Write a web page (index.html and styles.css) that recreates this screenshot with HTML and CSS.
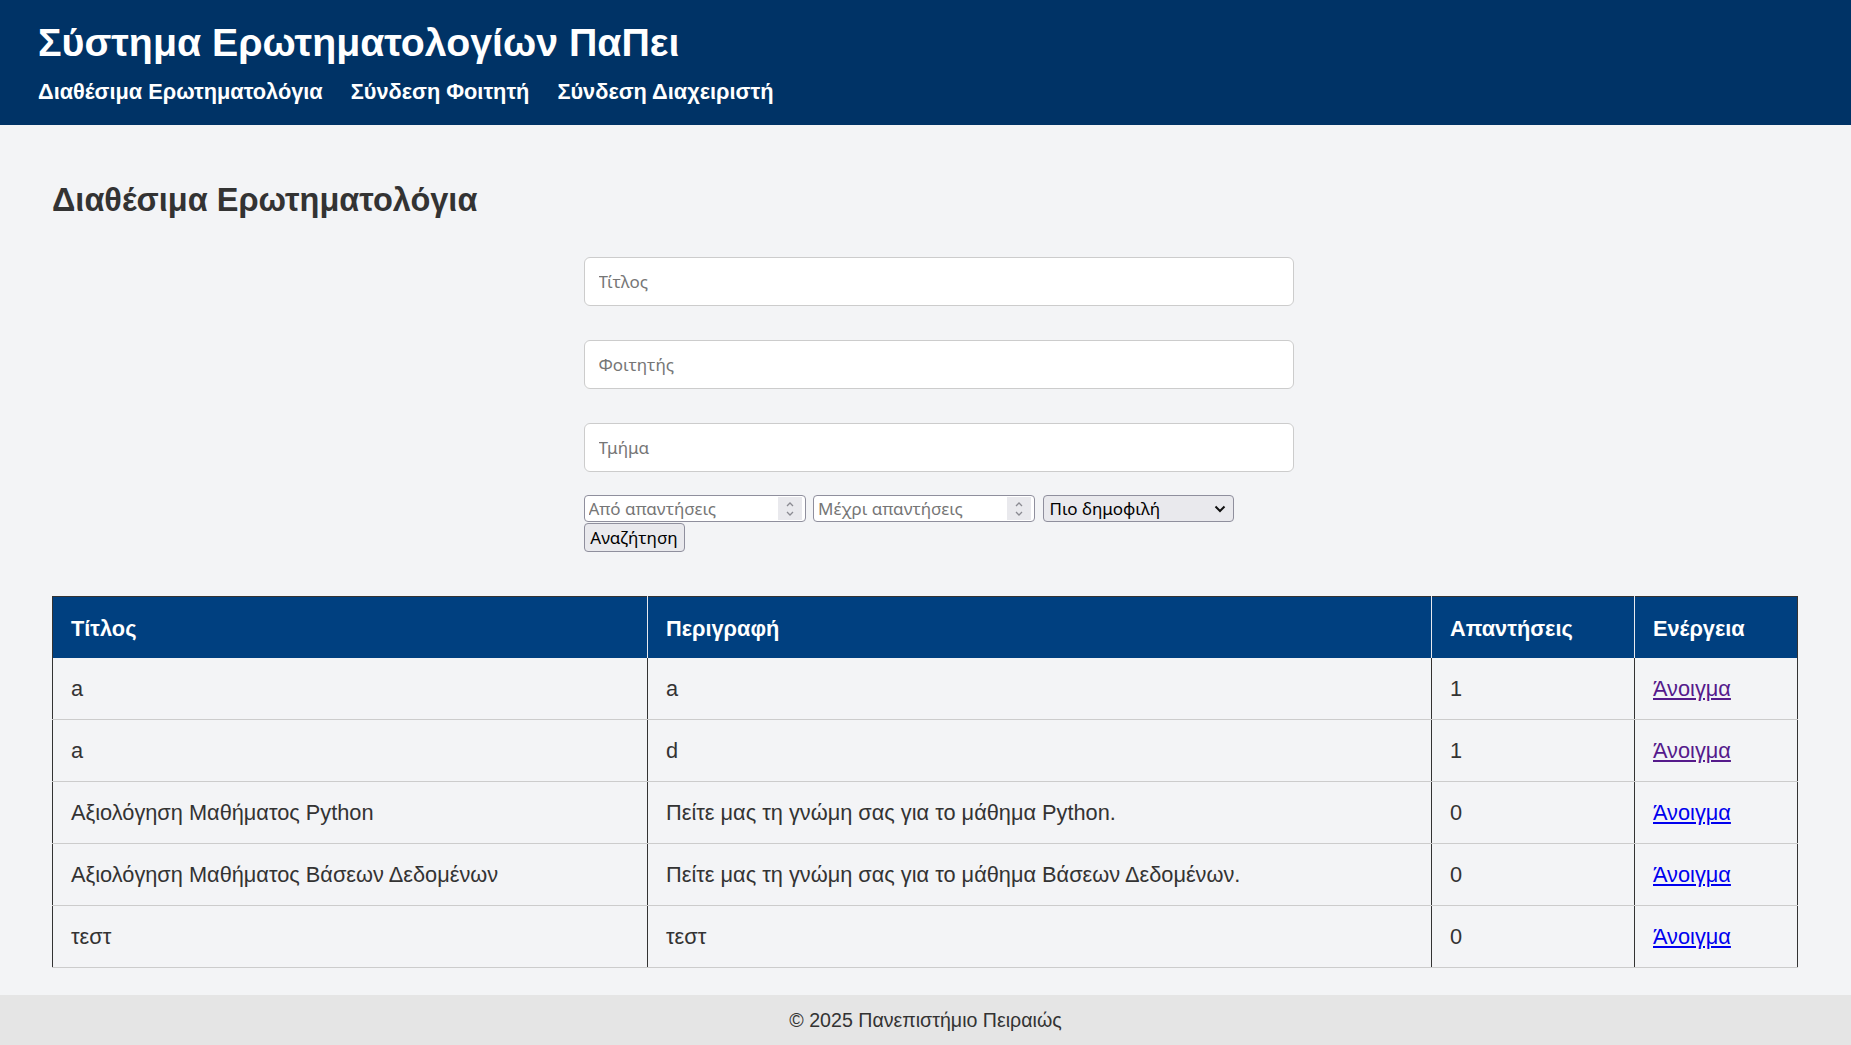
FILE: index.html
```html
<!DOCTYPE html>
<html lang="el">
<head>
<meta charset="utf-8">
<title>Σύστημα Ερωτηματολογίων ΠαΠει</title>
<link rel="stylesheet" href="styles.css">
</head>
<body>
<header class="site-header">
  <h1 class="site-title">Σύστημα Ερωτηματολογίων ΠαΠει</h1>
  <nav class="site-nav">
    <a href="#">Διαθέσιμα Ερωτηματολόγια</a>
    <a href="#">Σύνδεση Φοιτητή</a>
    <a href="#">Σύνδεση Διαχειριστή</a>
  </nav>
</header>
<main class="content">
  <h2 class="page-title">Διαθέσιμα Ερωτηματολόγια</h2>
  <form class="search-form">
    <div class="fields">
      <input class="text-field" type="text" placeholder="Τίτλος">
      <input class="text-field" type="text" placeholder="Φοιτητής">
      <input class="text-field" type="text" placeholder="Τμήμα">
    </div>
    <div class="filter-row">
      <div class="num-field">
        <input type="number" placeholder="Από απαντήσεις">
        <span class="spin"><svg width="24" height="22" viewBox="0 0 24 22"><path d="M9 8 L12 5 L15 8" fill="none" stroke="#8b8b92" stroke-width="1.3"/><path d="M9 14 L12 17 L15 14" fill="none" stroke="#8b8b92" stroke-width="1.3"/></svg></span>
      </div>
      <div class="num-field">
        <input type="number" placeholder="Μέχρι απαντήσεις">
        <span class="spin"><svg width="24" height="22" viewBox="0 0 24 22"><path d="M9 8 L12 5 L15 8" fill="none" stroke="#8b8b92" stroke-width="1.3"/><path d="M9 14 L12 17 L15 14" fill="none" stroke="#8b8b92" stroke-width="1.3"/></svg></span>
      </div>
      <div class="select-field">
        <select>
          <option>Πιο δημοφιλή</option>
          <option>Λιγότερο δημοφιλή</option>
          <option>Νεότερα</option>
        </select>
        <svg class="select-arrow" width="12" height="8" viewBox="0 0 12 8"><path d="M1.5 1.5 L6 6 L10.5 1.5" fill="none" stroke="#111" stroke-width="2"/></svg>
      </div>
    </div>
    <button class="search-btn" type="submit">Αναζήτηση</button>
  </form>
  <table class="survey-table">
    <colgroup>
      <col class="col-title">
      <col class="col-desc">
      <col class="col-count">
      <col class="col-action">
    </colgroup>
    <thead>
      <tr><th>Τίτλος</th><th>Περιγραφή</th><th>Απαντήσεις</th><th>Ενέργεια</th></tr>
    </thead>
    <tbody>
      <tr><td>a</td><td>a</td><td>1</td><td><a class="open-link visited" href="#">Άνοιγμα</a></td></tr>
      <tr><td>a</td><td>d</td><td>1</td><td><a class="open-link visited" href="#">Άνοιγμα</a></td></tr>
      <tr><td>Αξιολόγηση Μαθήματος Python</td><td>Πείτε μας τη γνώμη σας για το μάθημα Python.</td><td>0</td><td><a class="open-link" href="#">Άνοιγμα</a></td></tr>
      <tr><td>Αξιολόγηση Μαθήματος Βάσεων Δεδομένων</td><td>Πείτε μας τη γνώμη σας για το μάθημα Βάσεων Δεδομένων.</td><td>0</td><td><a class="open-link" href="#">Άνοιγμα</a></td></tr>
      <tr><td>τεστ</td><td>τεστ</td><td>0</td><td><a class="open-link" href="#">Άνοιγμα</a></td></tr>
    </tbody>
  </table>
</main>
<footer class="site-footer">© 2025 Πανεπιστήμιο Πειραιώς</footer>
</body>
</html>
```
FILE: styles.css
```css
* { box-sizing: border-box; }

html, body { margin: 0; padding: 0; }

body {
  font-family: "Liberation Sans", Arial, sans-serif;
  background: #f3f4f6;
  color: #333;
  font-size: 21.75px;
  min-height: 1045px;
  display: flex;
  flex-direction: column;
}

.site-header {
  background: #003366;
  color: #fff;
  padding: 20px 38px 21px;
}

.site-title {
  margin: 0 0 14px;
  font-size: 39.3px;
  line-height: 45px;
  font-weight: bold;
}

.site-nav {
  display: flex;
  gap: 28px;
  line-height: 25px;
}

.site-nav a {
  color: #fff;
  text-decoration: none;
  font-weight: bold;
  font-size: 21.75px;
}

.content {
  flex: 1;
  padding: 56px 54px 27px 52px;
}

.page-title {
  margin: 0 0 38px;
  font-size: 32.5px;
  line-height: 38px;
  font-weight: bold;
  color: #333;
}

.search-form {
  width: 738px;
  margin: 0 auto 44px;
  padding-left: 28px;
}

.fields {
  display: flex;
  flex-direction: column;
  gap: 34px;
  margin-bottom: 23px;
}

.text-field {
  display: block;
  width: 100%;
  height: 49px;
  padding: 0 14px;
  border: 1px solid #cccccc;
  border-radius: 6px;
  background: #fff;
  font-family: "Noto Sans", sans-serif;
  font-size: 17px;
  color: #222;
  outline: none;
}

.text-field::placeholder,
.num-field input::placeholder {
  color: #767676;
  opacity: 1;
}

.filter-row {
  display: flex;
  gap: 7.5px;
  height: 27px;
}

.num-field {
  display: flex;
  align-items: center;
  width: 222px;
  height: 27px;
  padding: 1px 3px 1px 0;
  border: 1px solid #8f8f9d;
  border-radius: 4px;
  background: #fff;
}

.num-field input {
  flex: 1;
  min-width: 0;
  height: 100%;
  border: 0;
  padding: 0 0 0 4px;
  background: transparent;
  font-family: "Noto Sans", sans-serif;
  font-size: 17px;
  color: #000;
  outline: none;
  -moz-appearance: textfield;
  appearance: textfield;
}

.num-field input::-webkit-inner-spin-button,
.num-field input::-webkit-outer-spin-button {
  -webkit-appearance: none;
  margin: 0;
}

.spin {
  display: flex;
  align-items: center;
  justify-content: center;
  width: 24px;
  height: 23px;
  background: #e9e9ed;
}

.spin svg { display: block; }

.select-field {
  position: relative;
  width: 191px;
  height: 27px;
}

.select-field select {
  -webkit-appearance: none;
  appearance: none;
  width: 100%;
  height: 100%;
  margin: 0;
  padding: 0 26px 0 6px;
  border: 1px solid #8f8f9d;
  border-radius: 4px;
  background: #e9e9ed;
  color: #000;
  font-family: "Noto Sans", sans-serif;
  font-size: 17px;
  outline: none;
}

.select-arrow {
  position: absolute;
  right: 8px;
  top: 10px;
  pointer-events: none;
}

.search-btn {
  display: block;
  margin-top: 1px;
  width: 101px;
  height: 29px;
  padding: 0;
  border: 1px solid #8f8f9d;
  border-radius: 4px;
  background: #e9e9ed;
  color: #000;
  font-family: "Noto Sans", sans-serif;
  font-size: 17px;
}

.survey-table {
  width: 100%;
  border-collapse: collapse;
  table-layout: fixed;
  font-size: 21.75px;
}

.col-title { width: 595px; }
.col-desc { width: 784px; }
.col-count { width: 203px; }
.col-action { width: 163px; }

.survey-table th {
  background: #004080;
  color: #fff;
  text-align: left;
  font-weight: bold;
  padding: 19px 18px 17px;
  line-height: 25px;
  border-top: 1px solid #333;
  border-left: 1px solid #e6e9ef;
  border-right: 1px solid #e6e9ef;
}

.survey-table th:first-child { border-left-color: #333; }
.survey-table th:last-child { border-right-color: #333; }

.survey-table td {
  padding: 18px 18px;
  line-height: 25px;
  color: #333;
  border-left: 1px solid #333;
  border-right: 1px solid #333;
  border-bottom: 1px solid #cccccc;
}

.open-link { color: #0000ee; text-decoration: underline; }
.open-link.visited { color: #551a8b; }

.site-footer {
  background: #e5e5e5;
  color: #333;
  text-align: center;
  font-size: 19.6px;
  line-height: 23px;
  padding: 13.5px 0;
}
```
